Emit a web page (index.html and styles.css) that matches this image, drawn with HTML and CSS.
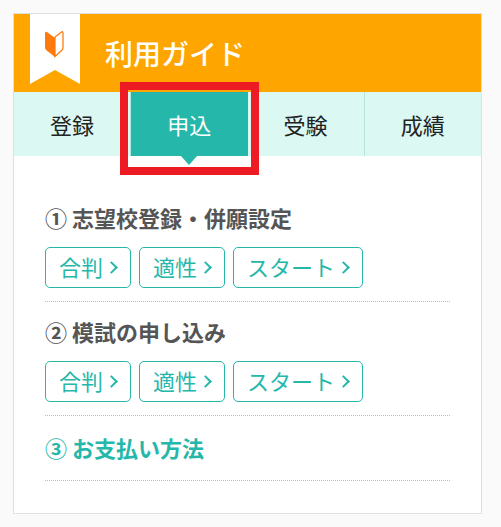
FILE: index.html
```html
<!DOCTYPE html>
<html lang="ja">
<head>
  <meta charset="UTF-8" />
  <title>利用ガイド</title>
  <link rel="stylesheet" href="styles.css">
</head>
<body>
  <div class="guide">
    <div class="guide-head">
      <div class="ribbon">
        <svg class="mark" width="20" height="28" viewBox="0 0 20 28">
          <path d="M1 3 Q1 1 3 2 L11 8 V27 L2 20 Q1 19 1 17 Z" fill="#ff7a0d"/>
          <path d="M19 3 Q19 1 17.5 2 L11 7 V26.5 L18 20 Q19 19 19 17 Z" fill="#fff" stroke="#ff7a0d" stroke-width="1.3"/>
        </svg>
      </div>
      <h2>利用ガイド</h2>
    </div>

    <ul class="tabs">
      <li>登録</li>
      <li class="active">申込</li>
      <li>受験</li>
      <li>成績</li>
    </ul>

    <div class="steps">
      <div class="step">
        <h3>① 志望校登録・併願設定</h3>
        <div class="links">
          <a class="link-btn">合判<span class="arrow"></span></a>
          <a class="link-btn">適性<span class="arrow"></span></a>
          <a class="link-btn">スタート<span class="arrow"></span></a>
        </div>
      </div>
      <div class="step">
        <h3>② 模試の申し込み</h3>
        <div class="links">
          <a class="link-btn">合判<span class="arrow"></span></a>
          <a class="link-btn">適性<span class="arrow"></span></a>
          <a class="link-btn">スタート<span class="arrow"></span></a>
        </div>
      </div>
      <div class="step">
        <h3 class="current">③ お支払い方法</h3>
      </div>
    </div>
  </div>
</body>
</html>
```

FILE: styles.css
```css
* {
  box-sizing: border-box;
}
body {
  margin: 0;
  background: #fafafa;
  font-family: "Noto Sans CJK JP", "Noto Sans", sans-serif;
}
.guide {
  width: 469px;
  height: 501px;
  margin: 13px 0 0 13px;
  background: white;
  border: 1px solid #e0e0e0;
}
.guide-head {
  display: flex;
  height: 78px;
  padding-left: 16px;
  background: #ffa500;
}
.ribbon {
  width: 50px;
  height: 70px;
  padding: 16px 0 0 14px;
  background: white;
  clip-path: polygon(0 0, 100% 0, 100% 100%, 50% 80%, 0 100%);
}
.mark {
  display: block;
}
.guide-head h2 {
  margin: 19px 0 0 25px;
  color: white;
  font-size: 28px;
  font-weight: 500;
  line-height: 40px;
}
.tabs {
  display: flex;
  height: 64px;
  margin: 0;
  padding: 0;
  list-style: none;
  background: #dcf8f3;
}
.tabs li {
  flex: 1;
  font-size: 22px;
  line-height: 64px;
  text-align: center;
  color: #222;
  border-right: 1px solid #b5e5dc;
}
.tabs li:last-child {
  border-right: none;
}
.tabs li.active {
  position: relative;
  color: white;
  background: #25b8aa;
  border-right: none;
}
/* 赤枠 */
.tabs li.active::before {
  content: "";
  position: absolute;
  left: -11px;
  right: -11px;
  top: -10px;
  bottom: -19px;
  border: 8px solid #ed1c24;
}
.tabs li.active::after {
  content: "";
  position: absolute;
  left: 50%;
  bottom: -9px;
  margin-left: -8px;
  border-top: 9px solid #25b8aa;
  border-left: 8px solid transparent;
  border-right: 8px solid transparent;
}
.steps {
  padding: 49px 31px 0;
}
.step {
  padding-bottom: 13px;
  margin-bottom: 17px;
  border-bottom: 1px dotted #bbb;
}
.step h3 {
  margin: 0 0 18px;
  color: #555;
  font-size: 22px;
  font-weight: 700;
  line-height: 24px;
}
.step h3.current {
  color: #25b8aa;
  margin: 0;
  padding: 2px 0 8px;
  box-sizing: content-box;
}
.links {
  display: flex;
  gap: 8px;
}
.link-btn {
  display: flex;
  align-items: center;
  height: 41px;
  padding: 0 14px 3px 13px;
  color: #25b8aa;
  font-size: 22px;
  border: 1px solid #25b8aa;
  border-radius: 5px;
}
.arrow {
  width: 9px;
  height: 9px;
  margin: 3px 0 0 4px;
  border-top: 2px solid #25b8aa;
  border-right: 2px solid #25b8aa;
  transform: rotate(45deg);
}
```
